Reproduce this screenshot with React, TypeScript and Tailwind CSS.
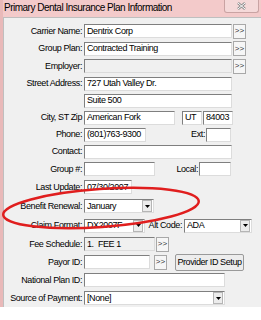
import React from "react";

const sans = "font-['Liberation_Sans',Arial,sans-serif]";
const txt = "text-[9px] tracking-[-0.4px] leading-none whitespace-nowrap";

function Field({ className, children, grey }: { className: string; children?: React.ReactNode; grey?: boolean }) {
  return (
    <div
      className={`${className} h-[14px] flex items-center pl-[2px] border border-t-[#7f7f7f] border-l-[#7f7f7f] border-b-[#dcdcdc] border-r-[#dcdcdc] ${grey ? "bg-[#f0f0f0]" : "bg-white"} ${txt} overflow-hidden`}
    >
      {children}
    </div>
  );
}

function Combo({ className, children }: { className: string; children?: React.ReactNode }) {
  return (
    <div
      className={`${className} h-[14px] flex items-center border border-t-[#7f7f7f] border-l-[#7f7f7f] border-b-[#dcdcdc] border-r-[#dcdcdc] bg-white ${txt}`}
    >
      <div className="flex-1 pl-[2px] overflow-hidden">{children}</div>
      <div className="w-[10px] h-[12px] mr-[1px] bg-[#ececec] border border-[#b5b5b5] flex items-center justify-center">
        <svg width="5" height="3" viewBox="0 0 5 3">
          <path d="M0 0H5L2.5 3Z" fill="#000" />
        </svg>
      </div>
    </div>
  );
}

function More({ className }: { className: string }) {
  return (
    <div
      className={`${className} w-[13px] h-[15px] flex items-center justify-center bg-[#f6f6f6] border border-[#a8a8a8] text-[8px] leading-none text-[#333]`}
    >
      &gt;&gt;
    </div>
  );
}

function Row({ label, h, children }: { label: string; h: string; children?: React.ReactNode }) {
  return (
    <div className={`flex items-center ${h}`}>
      <div className={`w-[78px] text-right ${txt}`}>{label}</div>
      <div className="ml-[2px] flex items-center">{children}</div>
    </div>
  );
}

export default function App() {
  return (
    <div className={`w-[261px] h-[320px] bg-white relative overflow-hidden text-black ${sans}`}>
      <div className="h-[307px] flex flex-col border-l-[3px] border-[#e9b9b9]">
        {/* title bar */}
        <div className="h-[19px] flex items-start bg-[#f3caca] relative">
          <div className="pt-[2px] pl-[1px] text-[10px] tracking-[-0.5px] leading-[12px] whitespace-nowrap">
            Primary Dental Insurance Plan Information
          </div>
          <div className="absolute right-[2px] top-0 w-[35px] h-[13px] border border-t-0 border-[#c9a3a3] rounded-b-[3px] bg-[#f5d9d9] flex items-center justify-center">
            <svg width="9" height="8" viewBox="0 0 9 8">
              <path d="M1 1L8 7M8 1L1 7" stroke="#8a8a8a" strokeWidth="2.4" />
              <path d="M1 1L8 7M8 1L1 7" stroke="#fff" strokeWidth="1" />
            </svg>
          </div>
        </div>
        {/* body */}
        <div className="flex-1 bg-[#f0f0f0] border-l border-t border-[#bfbfbf] pt-[4px]">
          <Row label="Carrier Name:" h="h-[18px]">
            <Field className="w-[148px]">Dentrix Corp</Field>
            <More className="ml-[1px]" />
          </Row>
          <Row label="Group Plan:" h="h-[17px]">
            <Field className="w-[148px]">Contracted Training</Field>
            <More className="ml-[1px]" />
          </Row>
          <Row label="Employer:" h="h-[18px]">
            <Field className="w-[148px]" grey />
            <More className="ml-[1px]" />
          </Row>
          <Row label="Street Address:" h="h-[17px]">
            <Field className="w-[148px]">727 Utah Valley Dr.</Field>
          </Row>
          <Row label="" h="h-[17px]">
            <Field className="w-[148px]">Suite 500</Field>
          </Row>
          <Row label="City, ST Zip" h="h-[17px]">
            <Field className="w-[91px]">American Fork</Field>
            <Field className="w-[20px] ml-[7px]">UT</Field>
            <Field className="w-[30px] ml-[1px]">84003</Field>
          </Row>
          <Row label="Phone:" h="h-[17px]">
            <Field className="w-[62px]">(801)763-9300</Field>
            <div className={`w-[60px] text-right pr-[1px] ${txt}`}>Ext:</div>
            <Field className="w-[25px]" />
          </Row>
          <Row label="Contact:" h="h-[17px]">
            <Field className="w-[148px]" />
          </Row>
          <Row label="Group #:" h="h-[18px]">
            <Field className="w-[71px]" />
            <div className={`w-[44px] text-right pr-[1px] ${txt}`}>Local:</div>
            <Field className="w-[32px]" />
          </Row>
          <Row label="Last Update:" h="h-[18px]">
            <Field className="w-[48px]">07/30/2007</Field>
          </Row>
          <Row label="Benefit Renewal:" h="h-[20px]">
            <Combo className="w-[70px]">January</Combo>
          </Row>
          <Row label="Claim Format:" h="h-[19px]">
            <Combo className="w-[61px]">DX2007F</Combo>
            <div className={`w-[39px] text-right pr-[2px] ${txt}`}>Alt Code:</div>
            <Combo className="w-[68px]">ADA</Combo>
          </Row>
          <Row label="Fee Schedule:" h="h-[18px]">
            <Field className="w-[71px]" grey>1.&nbsp;&nbsp;FEE 1</Field>
            <More className="ml-[1px]" />
          </Row>
          <Row label="Payor ID:" h="h-[18px]">
            <Field className="w-[66px]" />
            <More className="ml-[4px]" />
            <div className={`ml-[8px] w-[69px] h-[17px] flex items-center justify-center bg-[#ededed] border border-[#9a9a9a] rounded-[2px] ${txt}`}>
              Provider ID Setup
            </div>
          </Row>
          <Row label="National Plan ID:" h="h-[18px]">
            <Field className="w-[141px]" />
          </Row>
          <Row label="Source of Payment:" h="h-[18px]">
            <Combo className="w-[141px]">[None]</Combo>
          </Row>
        </div>
      </div>
      {/* highlight ellipse */}
      <svg className="absolute left-0 top-0" width="261" height="320" viewBox="0 0 261 320">
        <ellipse cx="101" cy="208" rx="98" ry="19" transform="rotate(-4 101 208)" fill="none" stroke="#e01e1e" strokeWidth="2.5" />
      </svg>
    </div>
  );
}
